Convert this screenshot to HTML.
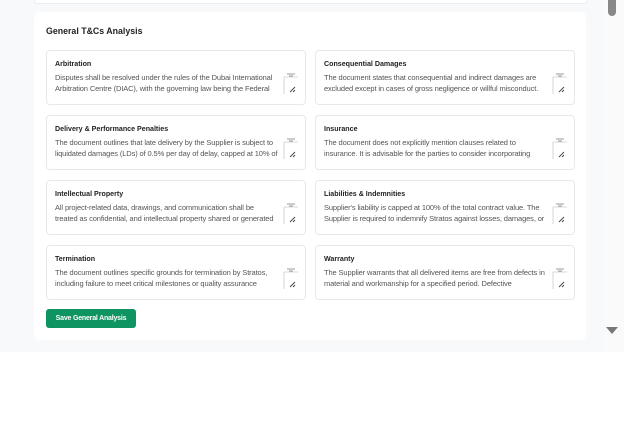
<!DOCTYPE html>
<html><head><style>
body{margin:0;width:624px;height:442px;background:#fff;font-family:"Liberation Sans",sans-serif;position:relative;overflow:hidden}
.bg{position:absolute;left:0;top:0;width:604px;height:352px;background:#f8f9fb}
.prev{position:absolute;left:34px;top:-6px;width:552px;height:8px;background:#fff;border:1px solid #eceef2;border-radius:4px}
.panel{position:absolute;left:34px;top:12px;width:552px;height:328px;background:#fff;border-radius:5px}
h2{position:absolute;left:12px;top:14px;margin:0;font-size:8.8px;font-weight:bold;color:#222}
.card{position:absolute;width:260px;height:55px;border:1px solid #e6e8ec;border-radius:4px;background:#fff;box-sizing:border-box}
.t{position:absolute;left:8px;top:9px;font-size:7.1px;font-weight:bold;color:#222}
.b{position:absolute;left:8px;top:21px;width:226px;font-size:7.5px;line-height:11px;color:#555;height:22px;overflow:hidden;letter-spacing:-0.12px;white-space:nowrap}
.ic{position:absolute;left:236px;top:20px}
.btn{position:absolute;left:12px;top:297px;width:90px;height:19px;background:#0e9460;border-radius:3px;color:#fff;font-size:7px;font-weight:bold;line-height:19px;text-align:center;letter-spacing:-0.2px}
.sb{position:absolute;left:604px;top:0;width:20px;height:352px;background:#fafafa}
.thumb{position:absolute;left:608px;top:0;width:8px;height:16px;background:#888;border-radius:0 0 4px 4px}
.arr{position:absolute;left:606px;top:327px;width:0;height:0;border-left:6px solid transparent;border-right:6px solid transparent;border-top:7px solid #777}
</style></head><body>
<div class="bg"></div><div class="prev"></div>
<div class="panel">
<h2>General T&amp;Cs Analysis</h2>
</div>
<div class="sb"></div><div class="thumb"></div><div class="arr"></div>
<div style="position:absolute;left:34px;top:12px">
<div class="btn">Save General Analysis</div>
</div>
<div class="card" style="left:46px;top:50px"><div class="t">Arbitration</div><div class="b">Disputes shall be resolved under the rules of the Dubai International<br>Arbitration Centre (DIAC), with the governing law being the Federal</div><svg class="ic" width="16" height="24"><path d="M4 3h8M6 5h4" stroke="#777" stroke-width="0.8"/><path d="M1 6h14M1 6v17" stroke="#ccc" stroke-width="0.8"/><path d="M7 21l5-5M10 21l2-2" stroke="#444" stroke-width="0.9"/></svg></div>
<div class="card" style="left:315px;top:50px"><div class="t">Consequential Damages</div><div class="b">The document states that consequential and indirect damages are<br>excluded except in cases of gross negligence or willful misconduct.</div><svg class="ic" width="16" height="24"><path d="M4 3h8M6 5h4" stroke="#777" stroke-width="0.8"/><path d="M1 6h14M1 6v17" stroke="#ccc" stroke-width="0.8"/><path d="M7 21l5-5M10 21l2-2" stroke="#444" stroke-width="0.9"/></svg></div>
<div class="card" style="left:46px;top:115px"><div class="t">Delivery &amp; Performance Penalties</div><div class="b">The document outlines that late delivery by the Supplier is subject to<br>liquidated damages (LDs) of 0.5% per day of delay, capped at 10% of</div><svg class="ic" width="16" height="24"><path d="M4 3h8M6 5h4" stroke="#777" stroke-width="0.8"/><path d="M1 6h14M1 6v17" stroke="#ccc" stroke-width="0.8"/><path d="M7 21l5-5M10 21l2-2" stroke="#444" stroke-width="0.9"/></svg></div>
<div class="card" style="left:315px;top:115px"><div class="t">Insurance</div><div class="b">The document does not explicitly mention clauses related to<br>insurance. It is advisable for the parties to consider incorporating</div><svg class="ic" width="16" height="24"><path d="M4 3h8M6 5h4" stroke="#777" stroke-width="0.8"/><path d="M1 6h14M1 6v17" stroke="#ccc" stroke-width="0.8"/><path d="M7 21l5-5M10 21l2-2" stroke="#444" stroke-width="0.9"/></svg></div>
<div class="card" style="left:46px;top:180px"><div class="t">Intellectual Property</div><div class="b">All project-related data, drawings, and communication shall be<br>treated as confidential, and intellectual property shared or generated</div><svg class="ic" width="16" height="24"><path d="M4 3h8M6 5h4" stroke="#777" stroke-width="0.8"/><path d="M1 6h14M1 6v17" stroke="#ccc" stroke-width="0.8"/><path d="M7 21l5-5M10 21l2-2" stroke="#444" stroke-width="0.9"/></svg></div>
<div class="card" style="left:315px;top:180px"><div class="t">Liabilities &amp; Indemnities</div><div class="b">Supplier's liability is capped at 100% of the total contract value. The<br>Supplier is required to indemnify Stratos against losses, damages, or</div><svg class="ic" width="16" height="24"><path d="M4 3h8M6 5h4" stroke="#777" stroke-width="0.8"/><path d="M1 6h14M1 6v17" stroke="#ccc" stroke-width="0.8"/><path d="M7 21l5-5M10 21l2-2" stroke="#444" stroke-width="0.9"/></svg></div>
<div class="card" style="left:46px;top:245px"><div class="t">Termination</div><div class="b">The document outlines specific grounds for termination by Stratos,<br>including failure to meet critical milestones or quality assurance</div><svg class="ic" width="16" height="24"><path d="M4 3h8M6 5h4" stroke="#777" stroke-width="0.8"/><path d="M1 6h14M1 6v17" stroke="#ccc" stroke-width="0.8"/><path d="M7 21l5-5M10 21l2-2" stroke="#444" stroke-width="0.9"/></svg></div>
<div class="card" style="left:315px;top:245px"><div class="t">Warranty</div><div class="b">The Supplier warrants that all delivered items are free from defects in<br>material and workmanship for a specified period. Defective</div><svg class="ic" width="16" height="24"><path d="M4 3h8M6 5h4" stroke="#777" stroke-width="0.8"/><path d="M1 6h14M1 6v17" stroke="#ccc" stroke-width="0.8"/><path d="M7 21l5-5M10 21l2-2" stroke="#444" stroke-width="0.9"/></svg></div>
</body></html>
